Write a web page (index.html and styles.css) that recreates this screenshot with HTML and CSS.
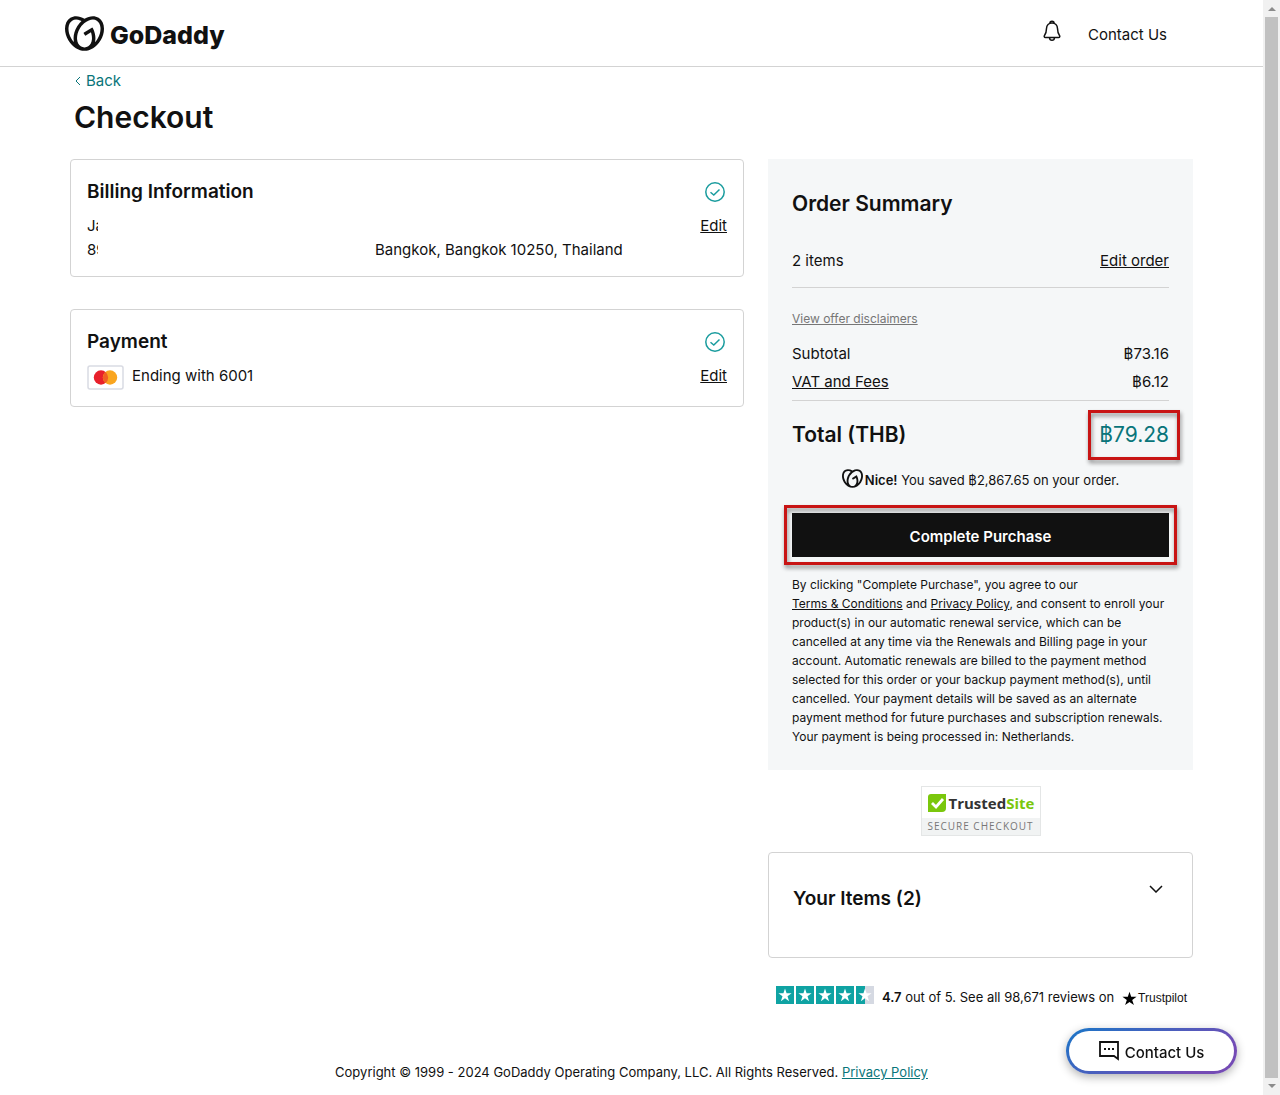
FILE: index.html
```html
<!DOCTYPE html>
<html lang="en">
<head>
<meta charset="utf-8">
<meta name="viewport" content="width=device-width, initial-scale=1">
<title>Checkout - GoDaddy</title>
<link rel="stylesheet" href="styles.css">
</head>
<body>
<svg class="defs" aria-hidden="true">
  <symbol id="go" viewBox="0 0 24 24"><path d="M20.702 2.29c-2.494-1.554-5.778-1.187-8.706.654C9.076 1.104 5.79.736 3.3 2.29c-3.941 2.463-4.42 8.806-1.07 14.167 2.47 3.954 6.333 6.269 9.77 6.226 3.439.043 7.301-2.273 9.771-6.226 3.347-5.361 2.872-11.704-1.069-14.167zM4.042 15.328a12.838 12.838 0 01-1.546-3.541 10.12 10.12 0 01-.336-3.338c.15-1.98.956-3.524 2.27-4.345 1.315-.822 3.052-.87 4.903-.137.281.113.556.24.825.382A15.11 15.11 0 007.5 7.54c-2.035 3.255-2.655 6.878-1.945 9.765a13.247 13.247 0 01-1.514-1.98zm17.465-3.541a12.866 12.866 0 01-1.547 3.54 13.25 13.25 0 01-1.513 1.984c.635-2.589.203-5.76-1.353-8.734a.39.39 0 00-.563-.153l-4.852 3.032a.397.397 0 00-.126.546l.712 1.139a.395.395 0 00.547.126l3.145-1.965c.101.306.203.606.28.916.296 1.086.41 2.214.335 3.337-.15 1.982-.956 3.525-2.27 4.347a4.437 4.437 0 01-2.25.65h-.101a4.432 4.432 0 01-2.25-.65c-1.314-.822-2.121-2.365-2.27-4.347-.074-1.123.039-2.252.335-3.337a13.212 13.212 0 014.05-6.482 10.148 10.148 0 012.849-1.765c1.845-.733 3.586-.685 4.9.137 1.316.822 2.122 2.365 2.271 4.345a10.146 10.146 0 01-.33 3.337z"/></symbol>
  <symbol id="check" viewBox="0 0 20 20"><circle cx="10" cy="10" r="9.2"/><path d="M5.500 10.200l3.300 2.800 5.700-5.500"/></symbol>
  <symbol id="star" viewBox="0 0 24 24"><path d="M12 1l2.7 8.2h8.6l-7 5.1 2.7 8.2-7-5.1-7 5.1 2.7-8.2-7-5.1h8.6z"/></symbol>
</svg>
<div class="viewport">
  <div class="page">
    <header class="header">
      <a class="logo" href="#"><svg class="logo-mark"><use href="#go"/></svg><span>GoDaddy</span></a>
      <nav class="nav">
        <button class="bell" type="button" aria-label="Notifications">
          <svg viewBox="0 0 18 22"><path d="M9 3c-3.200 0-5.400 2.300-5.500 5.500-.1 3.500-.5 5.200-2 6.900-.6.800-.3 2.100.9 2.100h13.200c1.200 0 1.500-1.300.9-2.100-1.500-1.700-1.900-3.400-2-6.900C14.400 5.300 12.200 3 9 3zM6.900 3.200C6.900.600 11.100.600 11.100 3.200M6.500 17.700c.3 3.400 4.700 3.400 5 0"/></svg>
        </button>
        <a href="#">Contact Us</a>
      </nav>
    </header>

    <main class="main">
      <a class="back" href="#"><svg viewBox="0 0 6 10"><path d="M5 1L1 5l4 4"/></svg>Back</a>
      <h1>Checkout</h1>
      <div class="columns">
        <div class="steps">
          <section class="card">
            <div class="card-head"><h2>Billing Information</h2><svg class="check"><use href="#check"/></svg></div>
            <div class="card-body">
              <div class="details">
                <div><span class="clipped">Ja</span></div>
                <div class="address"><span class="clipped">89</span><span>Bangkok, Bangkok 10250, Thailand</span></div>
              </div>
              <a href="#">Edit</a>
            </div>
          </section>
          <section class="card">
            <div class="card-head"><h2>Payment</h2><svg class="check"><use href="#check"/></svg></div>
            <div class="card-body payment">
              <div class="method">
                <svg class="mastercard" viewBox="0 0 37 25"><rect x="1" y="1" width="35" height="23" rx="2" fill="#fff" stroke="#d9dbe3" stroke-width="1.500"/><circle cx="14" cy="12.500" r="7.200" fill="#e8202b"/><circle cx="23" cy="12.500" r="7.200" fill="#f9a51f"/><path d="M18.500 6.900a7.200 7.200 0 010 11.200 7.200 7.200 0 010-11.200z" fill="#f06023"/></svg>
                <span>Ending with 6001</span>
              </div>
              <a href="#">Edit</a>
            </div>
          </section>
        </div>

        <aside class="side">
          <section class="summary">
            <h2>Order Summary</h2>
            <div class="row items"><span>2 items</span><a href="#">Edit order</a></div>
            <a class="disclaimers" href="#">View offer disclaimers</a>
            <div class="row"><span>Subtotal</span><span>฿73.16</span></div>
            <div class="row fees"><a href="#">VAT and Fees</a><span>฿6.12</span></div>
            <div class="row total"><strong>Total (THB)</strong><span class="amount marked">฿79.28</span></div>
            <p class="saved"><svg><use href="#go"/></svg><span><b>Nice!</b> You saved ฿2,867.65 on your order.</span></p>
            <div class="purchase marked"><button type="button">Complete Purchase</button></div>
            <p class="legal">By clicking "Complete Purchase", you agree to our<br>
              <a href="#">Terms &amp; Conditions</a> and <a href="#">Privacy Policy</a>, and consent to enroll your<br>
              product(s) in our automatic renewal service, which can be<br>
              cancelled at any time via the Renewals and Billing page in your<br>
              account. Automatic renewals are billed to the payment method<br>
              selected for this order or your backup payment method(s), until<br>
              cancelled. Your payment details will be saved as an alternate<br>
              payment method for future purchases and subscription renewals.<br>
              Your payment is being processed in: Netherlands.</p>
          </section>

          <a class="trusted" href="#">
            <span class="trusted-name"><svg viewBox="0 0 18 18"><path d="M3 0h15v14a4 4 0 01-4 4H0V3a3 3 0 013-3z" fill="#7ac70c"/><path d="M4 9l4 4 7-8" fill="none" stroke="#fff" stroke-width="2.800"/></svg><span>Trusted<em>Site</em></span></span>
            <span class="trusted-note">SECURE CHECKOUT</span>
          </a>

          <section class="your-items">
            <h2>Your Items (2)</h2>
            <button type="button" aria-label="Show items"><svg viewBox="0 0 14 8"><path d="M1 1l6 6 6-6"/></svg></button>
          </section>

          <div class="reviews">
            <span class="stars" role="img" aria-label="4.7 out of 5 stars">
              <svg><use href="#star"/></svg><svg><use href="#star"/></svg><svg><use href="#star"/></svg><svg><use href="#star"/></svg><svg class="half"><use href="#star"/></svg>
            </span>
            <span><b>4.7</b> out of 5. See all 98,671 reviews on</span>
            <a class="trustpilot" href="#"><svg><use href="#star"/></svg>Trustpilot</a>
          </div>
        </aside>
      </div>
    </main>

    <footer class="footer">Copyright © 1999 - 2024 GoDaddy Operating Company, LLC. All Rights Reserved. <a href="#">Privacy Policy</a></footer>
  </div>

  <div class="scrollbar" aria-hidden="true">
    <svg viewBox="0 0 8 4"><path d="M4 0l4 4H0z"/></svg>
    <div class="thumb"></div>
    <svg viewBox="0 0 8 4"><path d="M0 0h8L4 4z"/></svg>
  </div>
</div>
<button class="chat" type="button"><svg viewBox="0 0 20 20"><path d="M1 1h18v17l-4-3H1z"/><path d="M5 8h2M9 8h2M13 8h2"/></svg><span>Contact Us</span></button>
</body>
</html>
```
FILE: styles.css
```css
* { box-sizing: border-box; }

body {
  margin: 0;
  background: #fff;
  color: #111;
  font: 15px/24px Inter, "Liberation Sans", sans-serif;
}

a { color: inherit; }
h1, h2, p { margin: 0; }
h1, h2, strong, b { font-weight: 600; }
svg { display: block; flex: none; }
button {
  padding: 0;
  border: 0;
  background: none;
  color: inherit;
  font: inherit;
  cursor: pointer;
}

.defs { position: absolute; width: 0; height: 0; }

.viewport {
  display: grid;
  grid-template-columns: minmax(0, 1fr) 17px;
  min-height: 100vh;
}

/* Header */
.header {
  display: flex;
  align-items: center;
  justify-content: space-between;
  height: 67px;
  padding: 0 96px 0 65px;
  border-bottom: 1px solid #d3d3d3;
}
.logo {
  display: flex;
  align-items: center;
  gap: 6px;
  font-size: 25px;
  font-weight: 800;
  text-decoration: none;
}
.logo span { padding-top: 3px; }
.logo-mark { width: 39px; height: 39px; fill: #111; }
.nav { display: flex; align-items: center; gap: 27px; padding-top: 4px; }
.nav a { text-decoration: none; }
.bell { padding-bottom: 8px; }
.bell svg {
  width: 18px;
  height: 22px;
  fill: none;
  stroke: #111;
  stroke-width: 1.5;
}

/* Main columns */
.main { padding: 2px 70px 0; }
.back {
  display: inline-flex;
  align-items: center;
  gap: 5px;
  padding-left: 5px;
  color: #09757a;
  text-decoration: none;
}
.back svg { width: 6px; height: 10px; fill: none; stroke: currentColor; }
h1 {
  padding: 2px 0 20px 4px;
  font-size: 30px;
  line-height: 44px;
}
.columns {
  display: grid;
  grid-template-columns: 674fr 425fr;
  gap: 24px;
  align-items: start;
}
.steps { display: grid; gap: 32px; }

/* Step cards */
.card {
  padding: 16px 16px 14px;
  border: 1px solid #d3d3d3;
  border-radius: 4px;
}
.card-head {
  display: flex;
  align-items: center;
  justify-content: space-between;
  padding: 0 2px 6px 0;
}
.card-head h2 { font-size: 19px; line-height: 32px; }
.check {
  width: 20px;
  height: 20px;
  fill: none;
  stroke: #1a9c9e;
  stroke-width: 1.5;
}
.card-body { display: flex; justify-content: space-between; gap: 16px; }
.address { display: grid; grid-template-columns: 288px auto; }
.clipped {
  display: block;
  width: 11px;
  overflow: hidden;
  white-space: nowrap;
}
.payment { min-height: 28px; }
.method { display: flex; gap: 8px; }
.mastercard { width: 37px; height: 27px; }

/* Order summary */
.summary {
  display: flex;
  flex-direction: column;
  padding: 28px 24px 24px;
  background: #f5f7f8;
}
.summary h2 { font-size: 21px; line-height: 34px; }
.row {
  display: flex;
  align-items: center;
  justify-content: space-between;
  line-height: 28px;
}
.items {
  margin-top: 26px;
  padding-bottom: 12px;
  border-bottom: 1px solid #d3d3d3;
}
.disclaimers {
  align-self: flex-start;
  margin: 21px 0 11px;
  color: #767676;
  font-size: 12px;
  line-height: 20px;
}
.fees { padding-bottom: 4px; border-bottom: 1px solid #d3d3d3; }
.total { margin-top: 17px; font-size: 21px; line-height: 34px; }
.amount { color: #09757a; }
.saved {
  display: flex;
  justify-content: center;
  gap: 2px;
  margin-top: 16px;
  font-size: 13px;
  white-space: nowrap;
}
.saved svg { width: 21px; height: 21px; fill: #111; }
.purchase { margin-top: 21px; }
.purchase button {
  display: block;
  width: 100%;
  height: 44px;
  padding-top: 3px;
  background: #111;
  color: #fff;
  font-weight: 600;
}
.legal { margin-top: 18px; font-size: 12px; line-height: 19px; white-space: nowrap; }

/* Red call-out frames drawn over the content */
.marked { position: relative; }
.marked::after {
  content: "";
  position: absolute;
  inset: -8px;
  border: 3px solid #c81414;
  filter: drop-shadow(1px 3px 2px rgba(0, 0, 0, .45));
  pointer-events: none;
}
.amount::after { inset: -8px -11px; }

/* Trust badge */
.trusted {
  display: block;
  width: 120px;
  margin: 16px auto;
  border: 1px solid #e4e6e6;
  font-family: "Open Sans", sans-serif;
  text-decoration: none;
}
.trusted-name {
  display: flex;
  align-items: center;
  gap: 3px;
  height: 31px;
  padding-left: 6px;
  color: #333;
  font-size: 15px;
  font-weight: 700;
}
.trusted-name svg { width: 18px; height: 18px; }
.trusted-name em { color: #7ac70c; font-style: normal; }
.trusted-note {
  display: block;
  background: #f1f3f3;
  color: #777;
  font-size: 10px;
  line-height: 17px;
  letter-spacing: 1px;
  text-align: center;
}

/* Your items */
.your-items {
  display: flex;
  align-items: flex-start;
  justify-content: space-between;
  min-height: 106px;
  padding: 32px 29px 32px 24px;
  border: 1px solid #d3d3d3;
  border-radius: 4px;
}
.your-items h2 { font-size: 19px; line-height: 28px; }
.your-items svg { width: 14px; height: 8px; fill: none; stroke: #111; stroke-width: 1.5; }

/* Reviews */
.reviews {
  display: flex;
  align-items: center;
  justify-content: space-between;
  gap: 4px;
  margin: 26px 6px 0 8px;
  font-size: 13px;
  white-space: nowrap;
}
.stars { display: flex; gap: 2px; padding-bottom: 4px; }
.stars svg { width: 18px; height: 18px; padding: 2px; background: #0fa3a3; fill: #fff; }
.stars .half { background: linear-gradient(90deg, #0fa3a3 50%, #d5d9e2 50%); }
.trustpilot {
  display: flex;
  align-items: center;
  gap: 1px;
  padding-top: 2px;
  font-size: 12px;
  font-family: "Liberation Sans", sans-serif;
  text-decoration: none;
}
.trustpilot svg { width: 15px; height: 15px; }

.footer { margin-top: 50px; font-size: 13px; text-align: center; }
.footer a { color: #09757a; }

/* Page scrollbar */
.scrollbar {
  position: sticky;
  top: 0;
  display: flex;
  flex-direction: column;
  align-items: center;
  gap: 6px;
  height: 100vh;
  padding: 7px 0;
  background: #f1f1f1;
}
.scrollbar svg { width: 8px; height: 4px; fill: #8b8b8b; }
.thumb { flex: 1; width: 13px; background: #c1c1c1; }

/* Floating contact button */
.chat {
  position: fixed;
  right: 43px;
  bottom: 21px;
  display: flex;
  align-items: center;
  justify-content: center;
  gap: 6px;
  width: 171px;
  height: 46px;
  border: 3px solid transparent;
  border-radius: 23px;
  background: linear-gradient(#fff, #fff) padding-box, linear-gradient(150deg, #1976c7, #744bb5 80%) border-box;
  box-shadow: 0 3px 10px rgba(0, 0, 0, .3);
  font-weight: 500;
}
.chat span { padding-top: 3px; }
.chat svg { width: 20px; height: 20px; fill: none; stroke: #111; stroke-width: 1.8; }
```
